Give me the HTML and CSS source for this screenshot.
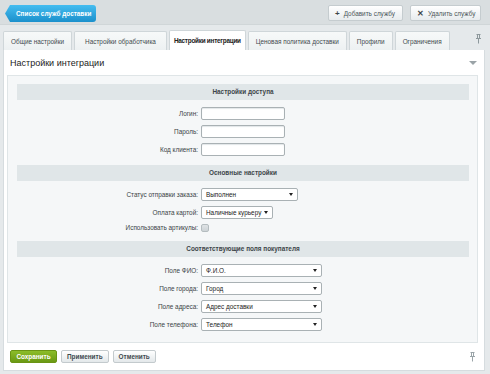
FILE: index.html
```html
<!DOCTYPE html>
<html lang="ru">
<head>
    <meta charset="UTF-8">
    <title>Настройки интеграции</title>
    <link rel="stylesheet" href="styles.css">
</head>
<body>
    <div class="topbar">
        <a class="back-btn">Список служб доставки</a>
        <div class="top-actions">
            <a class="top-btn"><span class="ico">+</span>Добавить службу</a>
            <a class="top-btn"><span class="ico">✕</span>Удалить службу</a>
        </div>
    </div>

    <div class="tabs">
        <div class="tab">Общие настройки</div>
        <div class="tab wide">Настройки обработчика</div>
        <div class="tab active">Настройки интеграции</div>
        <div class="tab">Ценовая политика доставки</div>
        <div class="tab">Профили</div>
        <div class="tab">Ограничения</div>
        <svg class="pin" width="5" height="10" viewBox="0 0 5 10">
            <path d="M0.5 0.5h4M1.5 0.5v4M3.5 0.5v4M0 4.5h5M2.5 4.5v5" stroke="#8d989c" fill="none"/>
        </svg>
    </div>

    <div class="panel">
        <div class="panel-head">
            <span class="panel-title">Настройки интеграции</span>
            <span class="collapse"></span>
        </div>

        <div class="form-box">
            <div class="section-head">Настройки доступа</div>
            <div class="row"><label>Логин:</label><input class="text w84" type="text"></div>
            <div class="row"><label>Пароль:</label><input class="text w84" type="password"></div>
            <div class="row"><label>Код клиента:</label><input class="text w84" type="text"></div>

            <div class="section-head">Основные настройки</div>
            <div class="row"><label>Статус отправки заказа:</label><div class="select w97">Выполнен</div></div>
            <div class="row"><label>Оплата картой:</label><div class="select w72">Наличные курьеру</div></div>
            <div class="row short"><label>Использовать артикулы:</label><span class="check"></span></div>

            <div class="section-head">Соответствующие поля покупателя</div>
            <div class="row"><label>Поле ФИО:</label><div class="select w121">Ф.И.О.</div></div>
            <div class="row"><label>Поле города:</label><div class="select w121">Город</div></div>
            <div class="row"><label>Поле адреса:</label><div class="select w121">Адрес доставки</div></div>
            <div class="row"><label>Поле телефона:</label><div class="select w121">Телефон</div></div>
        </div>

        <div class="panel-foot">
            <button class="btn save">Сохранить</button>
            <button class="btn">Применить</button>
            <button class="btn">Отменить</button>
            <svg class="pin foot-pin" width="5" height="10" viewBox="0 0 5 10">
                <path d="M0.5 0.5h4M1.5 0.5v4M3.5 0.5v4M0 4.5h5M2.5 4.5v5" stroke="#9aa4a8" fill="none"/>
            </svg>
        </div>
    </div>
</body>
</html>
```

FILE: styles.css
```css
body {
    margin: 0;
    background-color: #e5e9eb;
    font-family: "Liberation Sans", Arial, sans-serif;
    font-size: 6.4px;
    color: #333;
    width: 490px;
    height: 374px;
    overflow: hidden;
}
.topbar {
    height: 25px;
    box-sizing: border-box;
    background-color: #d9dee0;
    border-bottom: 1px solid #d0d6d8;
    display: flex;
    justify-content: space-between;
    align-items: flex-start;
    padding: 5px 9px 0 5px;
}
.back-btn {
    display: flex;
    align-items: center;
    height: 17px;
    width: 91px;
    box-sizing: border-box;
    padding-left: 11px;
    background: linear-gradient(#45bdf0, #1b90cc);
    color: #fff;
    font-weight: bold;
    white-space: nowrap;
    border-radius: 0 3px 3px 0;
    clip-path: polygon(5px 0, 100% 0, 100% 100%, 5px 100%, 0 50%);
}
.top-actions {
    display: flex;
    gap: 7px;
}
.top-btn {
    display: flex;
    align-items: center;
    height: 16px;
    width: 75px;
    box-sizing: border-box;
    padding: 0 0 0 6px;
    background: linear-gradient(#ffffff, #e8ecee);
    border: 1px solid #c5cccf;
    border-radius: 2px;
    color: #4b5559;
    white-space: nowrap;
}
.top-btn + .top-btn {
    width: 71px;
}
.top-btn .ico {
    font-weight: bold;
    font-size: 8px;
    margin-right: 4px;
    color: #3c4548;
}
.tabs {
    display: flex;
    align-items: flex-end;
    gap: 2px;
    height: 25px;
    padding-left: 3px;
    position: relative;
}
.tab {
    height: 19px;
    box-sizing: border-box;
    display: flex;
    align-items: center;
    padding: 0 7px;
    background: linear-gradient(#f7f9f9, #edf1f2);
    border: 1px solid #cfd6d9;
    border-bottom: none;
    border-radius: 2px 2px 0 0;
    color: #3f4a4e;
    white-space: nowrap;
}
.tab.wide {
    padding: 0 10px;
}
.tab.active {
    background: #fff;
    font-weight: bold;
    color: #222;
    height: 20px;
    padding: 0 4px;
    letter-spacing: -0.25px;
}
.tabs .pin {
    position: absolute;
    right: 9px;
    top: 9px;
}
.panel {
    margin: 0 5px 0 3px;
    background-color: #fff;
    border: 1px solid #d6dcdf;
    border-top: none;
    padding: 0 6px 7px 3px;
}
.panel-head {
    height: 25px;
    display: flex;
    align-items: center;
    justify-content: space-between;
    padding-left: 3px;
}
.panel-title {
    font-size: 9px;
    color: #222;
}
.collapse {
    width: 0;
    height: 0;
    border-left: 4px solid transparent;
    border-right: 4px solid transparent;
    border-top: 4px solid #9aa3a7;
    margin-right: 1px;
}
.form-box {
    background-color: #f5f7f8;
    border: 1px solid #dfe5e7;
    padding: 8px 8px 9px 9px;
}
.section-head {
    height: 16px;
    line-height: 16px;
    background-color: #e0e6e8;
    text-align: center;
    font-weight: bold;
    color: #3c4548;
    margin: 7px 0 4px;
}
.section-head:first-child {
    margin-top: 0;
}
.row {
    display: grid;
    grid-template-columns: 181px auto;
    column-gap: 3px;
    align-items: center;
    height: 18px;
}
.row.short {
    height: 13px;
}
.row label {
    text-align: right;
    color: #3a4346;
}
.text {
    height: 13px;
    box-sizing: border-box;
    border: 1px solid #a9b1b4;
    border-radius: 2px;
    background: #fff;
    box-shadow: inset 0 1px 1px #e2e6e8;
    margin: 0;
    padding: 0 3px;
    font: inherit;
}
.w84 { width: 84px; }
.w97 { width: 97px; }
.w72 { width: 72px; }
.w121 { width: 121px; }
.select {
    height: 13px;
    box-sizing: border-box;
    border: 1px solid #a9b1b4;
    border-radius: 2px;
    background: #fff;
    padding-left: 4px;
    line-height: 11px;
    color: #222;
    position: relative;
    white-space: nowrap;
    overflow: hidden;
}
.select::after {
    content: "";
    position: absolute;
    right: 4px;
    top: 4px;
    border-left: 2px solid transparent;
    border-right: 2px solid transparent;
    border-top: 3px solid #222;
}
.check {
    width: 8px;
    height: 8px;
    box-sizing: border-box;
    border: 1px solid #b4bcbf;
    border-radius: 2px;
    background: linear-gradient(#dfe3e5, #cdd3d6);
}
.panel-foot {
    display: flex;
    align-items: center;
    gap: 4px;
    padding: 7px 0 0 3px;
}
.btn {
    height: 13px;
    box-sizing: border-box;
    padding: 0 5px;
    font: inherit;
    font-weight: bold;
    color: #3f4a4e;
    background: linear-gradient(#ffffff, #e3e8ea);
    border: 1px solid #c3cacd;
    border-radius: 2px;
    margin: 0;
}
.btn.save {
    width: 47px;
    color: #fff;
    background: linear-gradient(#8cbd2a, #6a9913);
    border-color: #6a9414;
}
.foot-pin {
    margin-left: auto;
    margin-right: 3px;
}
```
